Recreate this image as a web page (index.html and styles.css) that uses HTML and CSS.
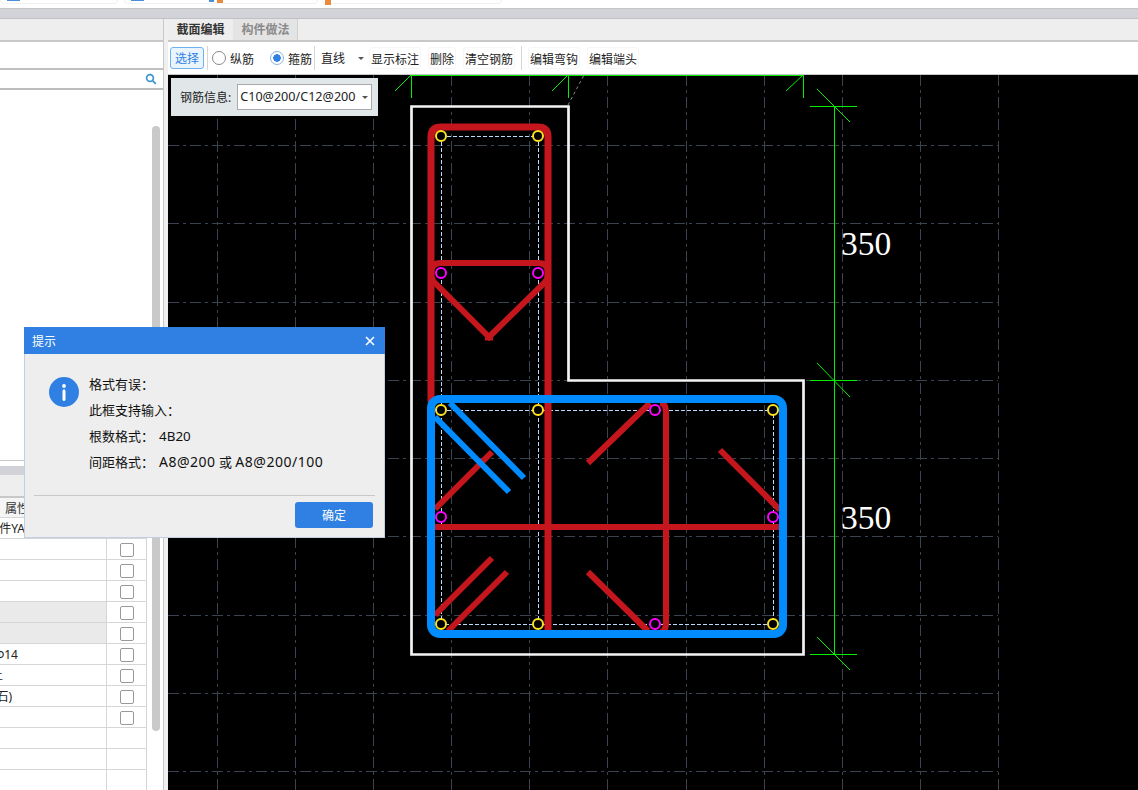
FILE: index.html
```html
<!DOCTYPE html>
<html lang="zh">
<head>
<meta charset="utf-8">
<title>截面编辑</title>
<link rel="stylesheet" href="styles.css">
</head>
<body>
<div class="app">
  <div class="topstrip">
    <div class="wintab wt1"><i class="mark blue"></i></div>
    <div class="wintab wt2"><i class="mark blue"></i><i class="mark blue m2"></i><i class="mark orange"></i></div>
    <div class="wintab wt3"><i class="mark orange"></i></div>
  </div>
  <div class="graybar"></div>
  <div class="main">
    <aside class="left">
      <div class="lhead"></div>
      <div class="lblank"></div>
      <div class="lsearch">
        <svg class="mag" viewBox="0 0 12 12"><circle cx="5" cy="5" r="3.4"/><path d="M7.6 7.6 10.8 10.8"/></svg>
      </div>
      <div class="tree"><div class="thumb t-up"></div></div>
      <div class="lband"></div>
      <div class="lhead2"></div>
      <div class="lower">
        <div class="table">
          <div class="row"><div class="c1"><span class="th">属性</span></div><div class="c2"></div></div>
          <div class="row"><div class="c1"><span class="clip w25">构件YA</span></div><div class="c2"></div></div>
          <div class="row"><div class="c1"></div><div class="c2"><i class="cb"></i></div></div>
          <div class="row"><div class="c1"></div><div class="c2"><i class="cb"></i></div></div>
          <div class="row"><div class="c1"></div><div class="c2"><i class="cb"></i></div></div>
          <div class="row"><div class="c1 shade"></div><div class="c2"><i class="cb"></i></div></div>
          <div class="row"><div class="c1 shade"></div><div class="c2"><i class="cb"></i></div></div>
          <div class="row"><div class="c1"><span class="clip w18">Φ14</span></div><div class="c2"><i class="cb"></i></div></div>
          <div class="row"><div class="c1"><span class="clip w3">土</span></div><div class="c2"><i class="cb"></i></div></div>
          <div class="row"><div class="c1"><span class="clip w12">石)</span></div><div class="c2"><i class="cb"></i></div></div>
          <div class="row"><div class="c1"></div><div class="c2"><i class="cb"></i></div></div>
          <div class="row"><div class="c1"></div><div class="c2"></div></div>
          <div class="row"><div class="c1"></div><div class="c2"></div></div>
          <div class="row"><div class="c1"></div><div class="c2"></div></div>
        </div>
        <div class="thumb t-low"></div>
      </div>
    </aside>
    <div class="splitter"></div>
    <section class="right">
      <div class="tabs">
        <div class="tab active">截面编辑</div>
        <div class="tab">构件做法</div>
      </div>
      <div class="toolbar">
        <button class="tool selected">选择</button>
        <span class="sep"></span>
        <label class="radio"><i class="dot"></i><span class="rt">纵筋</span></label>
        <label class="radio r2"><i class="dot on"></i><span class="rt">箍筋</span></label>
        <span class="sep s2"></span>
        <div class="combo">直线<i class="caret"></i></div>
        <button class="tool t-show">显示标注</button>
        <button class="tool t-del">删除</button>
        <button class="tool t-clear">清空钢筋</button>
        <span class="sep s3"></span>
        <button class="tool t-hook">编辑弯钩</button>
        <button class="tool t-end">编辑端头</button>
      </div>
      <div class="canvas">
        <svg class="draw" viewBox="168 75 970 715" width="970" height="715">
          <g class="grid">
            <path d="M168 145H998M168 223H998M168 302H998M168 380H998M168 458H998M168 536H998M168 615H998M168 693H998M168 771H998"/>
            <path d="M217 75V790M295 75V790M373 75V790M451 75V790M529 75V790M607 75V790M686 75V790M764 75V790M842 75V790M920 75V790M998 75V790"/>
          </g>
          <path class="ghost" d="M568 105 584 75"/>
          <g class="green">
            <path d="M411 75.5H803M411.5 75V98M568.5 75V98M803.5 75V98M810 106.5H857M810 380.5H857M810 654.5H857M834.5 106V654"/>
          </g>
          <g class="green thin">
            <path d="M395 91 411 75M552 91 568 75M786 91 803 75M817 89 850 122M817 363 850 397M817 637 850 670"/>
          </g>
          <path class="outline" d="M411.5 106.5H568.5V380.5H803.5V654.5H411.5Z"/>
          <g class="ties">
            <path d="M441 136H538M441 410H773V624H441M441 136V624M538 136V624"/>
          </g>
          <g class="red">
            <path class="w7" d="M431 402V137Q431 127 441 127H538Q548 127 548 137V630"/>
            <path class="w6" d="M441 263H538M441 263Q431 263 431 273Q431 280 436 284L489 337 543 284Q548 280 548 273Q548 263 538 263"/>
            <path class="w5" d="M485 338H493"/>
            <path class="w6" d="M434 527H780M660 403Q666 403 666 413V622Q666 632 660 632"/>
            <path class="w6" d="M492 452 435 509M492 558 435 615M507 572 448 631M588 463 650 403M588 572 648 631M720 450 780 510"/>
          </g>
          <g class="blue-bar">
            <rect class="w8" x="431" y="399" width="352" height="235" rx="9"/>
            <path class="w6" d="M450 403 524 478M435 417 509 492"/>
          </g>
          <g class="ring yellow">
            <circle cx="441" cy="136" r="5"/><circle cx="538" cy="136" r="5"/>
            <circle cx="441" cy="410" r="5"/><circle cx="538" cy="410" r="5"/>
            <circle cx="773" cy="410" r="5"/><circle cx="441" cy="624" r="5"/>
            <circle cx="538" cy="624" r="5"/><circle cx="773" cy="624" r="5"/>
          </g>
          <g class="ring magenta">
            <circle cx="441" cy="273" r="5"/><circle cx="538" cy="273" r="5"/>
            <circle cx="655" cy="410" r="5"/><circle cx="441" cy="517" r="5"/>
            <circle cx="773" cy="517" r="5"/><circle cx="655" cy="624" r="5"/>
          </g>
          <text class="dim" x="841" y="255">350</text>
          <text class="dim" x="841" y="529">350</text>
        </svg>
        <div class="info">
          <span class="info-label">钢筋信息:</span>
          <div class="info-select">C10@200/C12@200<i class="caret"></i></div>
        </div>
      </div>
    </section>
  </div>
</div>

<div class="dialog">
  <div class="d-title"><span>提示</span>
    <svg class="d-close" viewBox="0 0 10 10"><path d="M1 1 9 9M9 1 1 9"/></svg>
  </div>
  <div class="d-body">
    <svg class="d-icon" viewBox="0 0 30 30">
      <circle class="ic-bg" cx="15" cy="15" r="15"/>
      <circle class="ic-fg" cx="15" cy="9" r="1.9"/>
      <rect class="ic-fg" x="13.5" y="12.5" width="3" height="11.5" rx="1.4"/>
    </svg>
    <div class="d-text">
      <p>格式有误&#xFF1A;</p>
      <p>此框支持输入&#xFF1A;</p>
      <p>根数格式&#xFF1A;<span class="latin first">4B20</span></p>
      <p>间距格式&#xFF1A;<span class="latin first wide">A8@200</span> 或 <span class="latin wide">A8@200/100</span></p>
    </div>
  </div>
  <div class="d-foot"><button class="d-ok">确定</button></div>
</div>
</body>
</html>
```

FILE: styles.css
```css
* { box-sizing: border-box; }
html, body { margin: 0; padding: 0; height: 790px; overflow: hidden; background: #fff; }
body { font: 12px "Noto Sans", "Noto Sans CJK SC", sans-serif; color: #222; }
.app { display: flex; flex-direction: column; width: 1138px; height: 790px; }

/* top window strip */
.topstrip { height: 8px; display: flex; background: #fff; flex: none; }
.wintab { position: relative; height: 4px; border: 1px solid #f1f1f1; border-top: 0; border-radius: 0 0 4px 4px; }
.wt1 { width: 118px; margin-right: 6px; }
.wt2 { width: 194px; }
.wt3 { width: 180px; margin-left: 4px; }
.mark { position: absolute; top: 0; display: block; }
.mark.blue { left: 6px; width: 13px; height: 1px; background: #4a90d9; }
.mark.blue.m2 { left: 84px; width: 5px; height: 2px; }
.mark.orange { left: 92px; width: 6px; height: 3px; background: #e98a3c; }
.wt3 .mark.orange { left: 2px; height: 5px; }
.graybar { height: 11px; flex: none; background: #d1d3d9; border-top: 1px solid #c6c6c6; border-bottom: 1px solid #bfc1c6; }

.main { flex: 1; display: flex; min-height: 0; }
.left { width: 163px; flex: none; display: flex; flex-direction: column; background: #fff; }
.splitter { width: 5px; flex: none; background: #efefef; border-left: 1px solid #c8c8c8; }
.right { flex: 1; display: flex; flex-direction: column; min-width: 0; }

/* left column */
.lhead { height: 23px; flex: none; background: #eee; border-bottom: 2px solid #c8c8c8; }
.lblank { height: 28px; flex: none; border-bottom: 2px solid #c0c0c0; }
.lsearch { height: 20px; flex: none; display: flex; justify-content: flex-end; align-items: center; padding-right: 6px; border-bottom: 2px solid #bdbdbd; }
.mag { width: 12px; height: 12px; fill: none; stroke: #3b97cf; stroke-width: 1.7; }
.tree { height: 371px; flex: none; display: flex; justify-content: flex-end; padding: 36px 3px 0 0; border-bottom: 1px solid #c9c9c9; }
.thumb { width: 8px; flex: none; background: #c9c9c9; border-radius: 4px 4px 0 0; }
.t-up { height: 100%; }
.lband { height: 14px; flex: none; background: #d1d3d9; border-top: 5px solid #fff; }
.lhead2 { height: 23px; flex: none; background: #eee; border-bottom: 2px solid #c8c8c8; }
.lower { flex: 1; display: flex; gap: 5px; min-height: 0; overflow: hidden; }
.t-low { height: 233px; border-radius: 0 0 4px 4px; }
.table { width: 147px; flex: none; border-right: 1px solid #d4d4d4; }
.row { height: 21px; display: flex; border-bottom: 1px solid #d6d6d6; }
.row:first-child { height: 20px; background: #f5f5f5; }
.c1 { width: 107px; flex: none; display: flex; align-items: center; border-right: 1px solid #d6d6d6; overflow: hidden; }
.c1.shade { background: #eaeaea; }
.c2 { flex: 1; display: flex; align-items: center; justify-content: center; }
.cb { display: block; width: 14px; height: 14px; background: #fff; border: 1px solid #999; border-radius: 2px; margin-top: 2px; }
.th { padding-left: 5px; color: #333; white-space: nowrap; }
.clip { display: flex; justify-content: flex-end; overflow: hidden; white-space: nowrap; flex: none; }
.w25 { width: 25px; }
.w18 { width: 18px; }
.w3 { width: 3px; }
.w12 { width: 12px; }

/* tabs + toolbar */
.tabs { height: 23px; flex: none; display: flex; background: #eee; border-bottom: 2px solid #c8c8c8; }
.tab { width: 65px; height: 21px; line-height: 21px; padding-left: 1px; text-align: center; font-weight: 700; color: #8a8a8a; background: #e4e4e4; border-right: 1px solid #d2d2d2; }
.tab.active { color: #333; background: #eee; border-right: 0; padding-left: 0; }
.toolbar { height: 33px; flex: none; display: flex; align-items: center; background: #fff; border-bottom: 1px solid #c8c8c8; padding: 0 0 1px 2px; }
.tool { font: inherit; height: 22px; padding: 2px 0 0; background: #fff; color: #222; border: 1px solid #f6f6f6; border-radius: 3px; text-align: center; flex: none; }
.tool.selected { width: 34px; padding-top: 0; color: #2f80e2; background: #eaf4fd; border-color: #6fb1ee; }
.sep { width: 1px; height: 24px; background: #d6d6d6; margin-left: 3px; flex: none; }
.radio { display: flex; align-items: center; gap: 4px; margin-left: 4px; width: 56px; color: #222; flex: none; }
.rt { padding-top: 2px; }
.radio.r2 { margin-left: 2px; width: 43px; gap: 4px; }
.dot { display: block; width: 14px; height: 14px; border: 1px solid #888; border-radius: 50%; background: #fff; }
.dot.on { border-color: #8ab4e0; background: radial-gradient(circle, #2f80e2 0 3.5px, #fff 4px); }
.s2 { margin-left: 1px; }
.combo { position: relative; width: 51px; height: 22px; line-height: 24px; margin-left: 3px; padding-left: 3px; color: #222; flex: none; }
.caret { position: absolute; width: 0; height: 0; border: 3px solid transparent; border-top-color: #555; border-bottom: 0; }
.combo .caret { right: 5px; top: 10px; }
.t-show { width: 52px; }
.t-del { width: 28px; margin-left: 7px; }
.t-clear { width: 52px; margin-left: 7px; }
.s3 { margin-left: 6px; }
.t-hook { width: 52px; margin-left: 6px; }
.t-end { width: 52px; margin-left: 7px; }

/* drawing */
.canvas { position: relative; flex: 1; background: #000; overflow: hidden; }
.draw { display: block; fill: none; }
.grid path { stroke: #3b4250; stroke-width: 1; stroke-dasharray: 11 4 3 4; shape-rendering: crispEdges; }
.ghost { stroke: #888; stroke-width: 1; stroke-dasharray: 3 3; }
.green path { stroke: #00f000; stroke-width: 1; shape-rendering: crispEdges; }
.green.thin path { stroke-width: 1; shape-rendering: auto; }
.outline { stroke: #f4f4f4; stroke-width: 2.7; }
.ties path { stroke: #bcdcff; stroke-width: 1; stroke-dasharray: 4 2; shape-rendering: crispEdges; }
.red path { stroke: #c5161d; }
.blue-bar rect, .blue-bar path { stroke: #008cff; fill: none; }
.w5 { stroke-width: 5; }
.w6 { stroke-width: 6; }
.w7 { stroke-width: 7; }
.w8 { stroke-width: 8; }
.ring circle { stroke-width: 2; fill: #000; }
.ring.yellow circle { stroke: #ffe21f; }
.ring.magenta circle { stroke: #ff00ff; }
.dim { font: 33.5px "Liberation Serif", serif; fill: #fff; }
.info { position: absolute; left: 3px; top: 3px; width: 207px; height: 38px; background: #e1e7e9; display: flex; align-items: center; padding-left: 9px; gap: 6px; color: #222; }
.info-select { position: relative; width: 135px; height: 26px; line-height: 24px; background: #fff; border: 1px solid #aaa; padding-left: 2px; font-size: 12.6px; white-space: nowrap; }
.info-select .caret { right: 3px; top: 11px; }

/* dialog */
.dialog { position: absolute; left: 24px; top: 327px; width: 361px; height: 211px; background: #eee; border: 1px solid #c3cfe0; border-top: 0; display: flex; flex-direction: column; }
.d-title { height: 27px; margin: 0 -1px; padding: 0 10px 0 8px; background: #2f80e2; color: #fff; display: flex; align-items: center; justify-content: space-between; flex: none; }
.d-close { width: 10px; height: 10px; fill: none; stroke: #fff; stroke-width: 1.6; }
.d-body { flex: 1; display: flex; gap: 10px; padding: 22px 0 0 24px; color: #111; }
.d-icon { width: 30px; height: 30px; flex: none; margin-top: 1px; }
.ic-bg { fill: #2f80e2; }
.ic-fg { fill: #fff; }
.d-text { font-size: 13px; line-height: 26px; margin-top: -5px; }
.d-text p { margin: 0; white-space: nowrap; }
.latin { font-size: 13.4px; }
.latin.first { margin-left: 5px; }
.latin.wide { font-size: 14px; letter-spacing: .5px; }
.d-foot { height: 42px; flex: none; margin: 0 9px; border-top: 1px solid #c8c8c8; display: flex; justify-content: flex-end; align-items: flex-start; padding: 6px 2px 0 0; }
.d-ok { font: inherit; width: 78px; height: 26px; background: #2f80e2; color: #fff; border: 0; border-radius: 3px; }
```
